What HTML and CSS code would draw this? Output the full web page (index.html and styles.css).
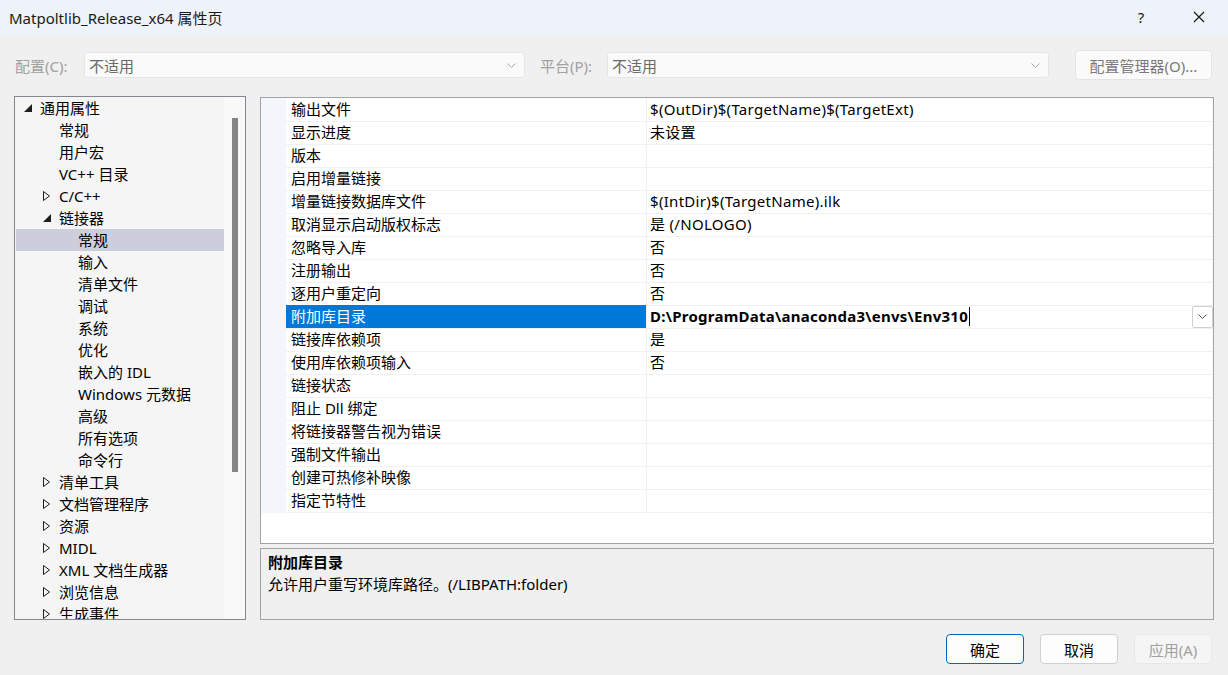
FILE: index.html
```html
<!DOCTYPE html>
<html lang="zh-CN">
<head>
	<title>Matpoltlib_Release_x64 属性页</title>
	<meta charset="utf-8" />
	<link rel="stylesheet" href="styles.css">
</head>
<body>
	<div class="titlebar">
		<span class="caption">Matpoltlib_Release_x64 属性页</span>
		<span class="help">?</span>
		<span class="close">
			<svg width="12" height="12" viewBox="0 0 12 12"><path d="M1 1L11 11M11 1L1 11" stroke="#1a1a1a" stroke-width="1.2" fill="none"/></svg>
		</span>
	</div>

	<div class="toolbar">
		<span class="lbl lbl-config">配置(C):</span>
		<div class="combo combo-config">
			<span>不适用</span>
			<svg class="chev" width="9" height="5" viewBox="0 0 9 5"><path d="M0.5 0.5L4.5 4.5L8.5 0.5" fill="none" stroke="#a8a8a8"/></svg>
		</div>
		<span class="lbl lbl-platform">平台(P):</span>
		<div class="combo combo-platform">
			<span>不适用</span>
			<svg class="chev" width="9" height="5" viewBox="0 0 9 5"><path d="M0.5 0.5L4.5 4.5L8.5 0.5" fill="none" stroke="#a8a8a8"/></svg>
		</div>
		<button class="btn-manager">配置管理器(O)...</button>
	</div>

	<div class="main">
		<div class="tree">
			<ul class="tree-list">
				<li class="node lv0"><span class="tw"><svg width="8" height="8" viewBox="0 0 8 8"><path d="M8 0V8H0Z" fill="#1e1e1e"/></svg></span>通用属性</li>
				<li class="node lv1"><span class="tw"></span>常规</li>
				<li class="node lv1"><span class="tw"></span>用户宏</li>
				<li class="node lv1"><span class="tw"></span>VC++ 目录</li>
				<li class="node lv1"><span class="tw"><svg width="7" height="10" viewBox="0 0 7 10"><path d="M0.5 0.5L6.5 5L0.5 9.5Z" fill="none" stroke="#1e1e1e"/></svg></span>C/C++</li>
				<li class="node lv1"><span class="tw"><svg width="8" height="8" viewBox="0 0 8 8"><path d="M8 0V8H0Z" fill="#1e1e1e"/></svg></span>链接器</li>
				<li class="node lv2 selected"><span class="tw"></span>常规</li>
				<li class="node lv2"><span class="tw"></span>输入</li>
				<li class="node lv2"><span class="tw"></span>清单文件</li>
				<li class="node lv2"><span class="tw"></span>调试</li>
				<li class="node lv2"><span class="tw"></span>系统</li>
				<li class="node lv2"><span class="tw"></span>优化</li>
				<li class="node lv2"><span class="tw"></span>嵌入的 IDL</li>
				<li class="node lv2"><span class="tw"></span>Windows 元数据</li>
				<li class="node lv2"><span class="tw"></span>高级</li>
				<li class="node lv2"><span class="tw"></span>所有选项</li>
				<li class="node lv2"><span class="tw"></span>命令行</li>
				<li class="node lv1"><span class="tw"><svg width="7" height="10" viewBox="0 0 7 10"><path d="M0.5 0.5L6.5 5L0.5 9.5Z" fill="none" stroke="#1e1e1e"/></svg></span>清单工具</li>
				<li class="node lv1"><span class="tw"><svg width="7" height="10" viewBox="0 0 7 10"><path d="M0.5 0.5L6.5 5L0.5 9.5Z" fill="none" stroke="#1e1e1e"/></svg></span>文档管理程序</li>
				<li class="node lv1"><span class="tw"><svg width="7" height="10" viewBox="0 0 7 10"><path d="M0.5 0.5L6.5 5L0.5 9.5Z" fill="none" stroke="#1e1e1e"/></svg></span>资源</li>
				<li class="node lv1"><span class="tw"><svg width="7" height="10" viewBox="0 0 7 10"><path d="M0.5 0.5L6.5 5L0.5 9.5Z" fill="none" stroke="#1e1e1e"/></svg></span>MIDL</li>
				<li class="node lv1"><span class="tw"><svg width="7" height="10" viewBox="0 0 7 10"><path d="M0.5 0.5L6.5 5L0.5 9.5Z" fill="none" stroke="#1e1e1e"/></svg></span>XML 文档生成器</li>
				<li class="node lv1"><span class="tw"><svg width="7" height="10" viewBox="0 0 7 10"><path d="M0.5 0.5L6.5 5L0.5 9.5Z" fill="none" stroke="#1e1e1e"/></svg></span>浏览信息</li>
				<li class="node lv1"><span class="tw"><svg width="7" height="10" viewBox="0 0 7 10"><path d="M0.5 0.5L6.5 5L0.5 9.5Z" fill="none" stroke="#1e1e1e"/></svg></span>生成事件</li>
			</ul>
			<div class="vscroll"><div class="thumb"></div></div>
		</div>

		<div class="right">
			<div class="grid">
				<div class="prop"><span class="gutter"></span><span class="name">输出文件</span><span class="value">$(OutDir)$(TargetName)$(TargetExt)</span></div>
				<div class="prop"><span class="gutter"></span><span class="name">显示进度</span><span class="value">未设置</span></div>
				<div class="prop"><span class="gutter"></span><span class="name">版本</span><span class="value"></span></div>
				<div class="prop"><span class="gutter"></span><span class="name">启用增量链接</span><span class="value"></span></div>
				<div class="prop"><span class="gutter"></span><span class="name">增量链接数据库文件</span><span class="value">$(IntDir)$(TargetName).ilk</span></div>
				<div class="prop"><span class="gutter"></span><span class="name">取消显示启动版权标志</span><span class="value">是 (/NOLOGO)</span></div>
				<div class="prop"><span class="gutter"></span><span class="name">忽略导入库</span><span class="value">否</span></div>
				<div class="prop"><span class="gutter"></span><span class="name">注册输出</span><span class="value">否</span></div>
				<div class="prop"><span class="gutter"></span><span class="name">逐用户重定向</span><span class="value">否</span></div>
				<div class="prop selected">
					<span class="gutter"></span>
					<span class="name">附加库目录</span>
					<span class="value"><span class="edit">D:\ProgramData\anaconda3\envs\Env310</span><span class="caret"></span>
						<span class="dropbtn"><svg width="9" height="5" viewBox="0 0 9 5"><path d="M0.5 0.5L4.5 4.5L8.5 0.5" fill="none" stroke="#555"/></svg></span>
					</span>
				</div>
				<div class="prop"><span class="gutter"></span><span class="name">链接库依赖项</span><span class="value">是</span></div>
				<div class="prop"><span class="gutter"></span><span class="name">使用库依赖项输入</span><span class="value">否</span></div>
				<div class="prop"><span class="gutter"></span><span class="name">链接状态</span><span class="value"></span></div>
				<div class="prop"><span class="gutter"></span><span class="name">阻止 Dll 绑定</span><span class="value"></span></div>
				<div class="prop"><span class="gutter"></span><span class="name">将链接器警告视为错误</span><span class="value"></span></div>
				<div class="prop"><span class="gutter"></span><span class="name">强制文件输出</span><span class="value"></span></div>
				<div class="prop"><span class="gutter"></span><span class="name">创建可热修补映像</span><span class="value"></span></div>
				<div class="prop"><span class="gutter"></span><span class="name">指定节特性</span><span class="value"></span></div>
			</div>
			<div class="desc">
				<div class="desc-title">附加库目录</div>
				<div class="desc-text">允许用户重写环境库路径。(/LIBPATH:folder)</div>
			</div>
		</div>
	</div>

	<div class="footer">
		<button class="btn btn-default">确定</button>
		<button class="btn">取消</button>
		<button class="btn btn-disabled">应用(A)</button>
	</div>
</body>
</html>
```

FILE: styles.css
```css
* {
	box-sizing: border-box;
}

body,
html {
	margin: 0;
	width: 1228px;
	height: 675px;
	overflow: hidden;
	background-color: #f0f0f0;
	font-family: "Noto Sans", "Noto Sans CJK SC", sans-serif;
	font-size: 15px;
	color: #000;
}

/* Title bar */
.titlebar {
	height: 34px;
	display: flex;
	align-items: center;
	padding-left: 9px;
	padding-right: 23px;
	background-color: #eef2f9;
	color: #1a1a1a;
}

.caption {
	flex: 1;
}

.help {
	width: 20px;
	text-align: center;
}

.close {
	display: flex;
	margin-left: 42px;
}

/* Configuration row */
.toolbar {
	height: 62px;
	display: flex;
	align-items: center;
	padding-left: 15px;
}

.lbl {
	color: #a0a0a0;
}

.lbl-config {
	width: 69px;
}

.lbl-platform {
	width: 67px;
	margin-left: 15px;
}

.combo {
	height: 26px;
	display: flex;
	align-items: center;
	justify-content: space-between;
	padding: 0 8px 0 4px;
	background-color: #fafafa;
	border: 1px solid #e6e6e6;
	border-radius: 3px;
	color: #6a6a6a;
}

.combo-config {
	width: 441px;
}

.combo-platform {
	width: 442px;
}

.btn-manager {
	width: 137px;
	height: 30px;
	margin-left: 26px;
	background-color: #fbfbfb;
	border: 1px solid #e5e5e5;
	border-radius: 4px;
	font-family: inherit;
	font-size: 15px;
	color: #7a7a7a;
	padding: 0;
}

/* Main area */
.main {
	display: flex;
	padding: 0 14px;
	gap: 14px;
}

.tree {
	width: 232px;
	height: 524px;
	display: flex;
	border: 1px solid #83878f;
	background-color: #f5f5f5;
	overflow: hidden;
}

.tree-list {
	list-style: none;
	margin: 0 0 0 1px;
	padding: 0;
	width: 208px;
}

.node {
	height: 22px;
	line-height: 22px;
	display: flex;
	align-items: center;
	white-space: nowrap;
}

.node.lv0 {
	padding-left: 8px;
}

.node.lv1 {
	padding-left: 27px;
}

.node.lv2 {
	padding-left: 46px;
}

.node.selected {
	background-color: #cccedb;
}

.tw {
	width: 16px;
	display: flex;
	align-items: center;
}

.vscroll {
	width: 21px;
	background-color: #f9f9f9;
}

.thumb {
	width: 6px;
	height: 354px;
	margin: 21px 0 0 8px;
	background-color: #858585;
}

.right {
	width: 954px;
	padding-top: 1px;
	display: flex;
	flex-direction: column;
	gap: 4px;
}

/* Property grid */
.grid {
	height: 447px;
	border: 1px solid #a2a2a2;
	background-color: #fff;
}

.prop {
	display: grid;
	grid-template-columns: 25px 361px 1fr;
	height: 23px;
	line-height: 23px;
}

.prop .gutter {
	background-color: #f3f6fb;
}

.prop .name {
	padding-left: 5px;
	border-bottom: 1px solid #f1f1f1;
	border-right: 1px solid #f1f1f1;
	white-space: nowrap;
}

.prop .value {
	padding-left: 3px;
	border-bottom: 1px solid #f1f1f1;
	white-space: nowrap;
	display: flex;
	align-items: center;
	letter-spacing: 0.3px;
}

.prop.selected .name {
	background-color: #0078d7;
	color: #fff;
}

.prop.selected .value {
	font-weight: bold;
	letter-spacing: 0.25px;
}

.caret {
	width: 1px;
	height: 19px;
	margin-left: 1px;
	background-color: #000;
}

.dropbtn {
	margin-left: auto;
	width: 21px;
	height: 22px;
	display: flex;
	align-items: center;
	justify-content: center;
	background-color: #fff;
	border: 1px solid #cfcfcf;
	border-radius: 2px;
}

/* Description box */
.desc {
	height: 72px;
	border: 1px solid #a2a2a2;
	padding: 2px 7px;
	line-height: 22px;
}

.desc-title {
	font-weight: bold;
}

/* Dialog buttons */
.footer {
	display: flex;
	justify-content: flex-end;
	gap: 16px;
	padding: 14px 16px 0 0;
}

.btn {
	width: 78px;
	height: 30px;
	padding: 0;
	background-color: #fdfdfd;
	border: 1px solid #d0d0d0;
	border-radius: 4px;
	font-family: inherit;
	font-size: 15px;
	color: #000;
}

.btn-default {
	border-color: #0067c0;
}

.btn-disabled {
	background-color: #f5f5f5;
	border-color: #e8e8e8;
	color: #a0a0a0;
}
```
